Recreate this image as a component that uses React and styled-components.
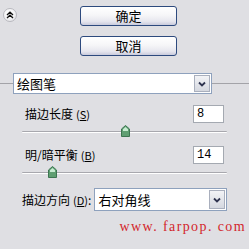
import React from "react";
import styled, { createGlobalStyle } from "styled-components";

const Global = createGlobalStyle`
  html, body { margin: 0; padding: 0; background: #dfdfe3; }
  body { font-family: "Noto Sans CJK SC", "Liberation Sans", sans-serif; }
`;

const Panel = styled.div`
  width: 249px;
  height: 249px;
  overflow: hidden;
  background: #dfdfe3;
  color: #000;
  font-size: 12px;
  display: flex;
  flex-direction: column;
`;

const Top = styled.div`
  display: grid;
  grid-template-columns: 80px 97px;
  padding-top: 6px;
`;

const Collapse = styled.div`
  width: 12px;
  height: 12px;
  margin: 2px 0 0 3px;
  border-radius: 50%;
  border: 1px solid #b9b9bf;
  background: radial-gradient(circle at 40% 35%, #ffffff 0%, #f2f2f4 55%, #d6d6dc 100%);
  display: flex;
  align-items: center;
  justify-content: center;
`;

const Buttons = styled.div`
  display: flex;
  flex-direction: column;
  gap: 10px;
`;

const Button = styled.button`
  box-sizing: border-box;
  width: 97px;
  height: 20px;
  padding: 0;
  border: 1px solid #2d4a7e;
  border-radius: 3px;
  background: linear-gradient(#ffffff 0%, #f6f6f8 45%, #e6e6ee 80%, #c9cbdc 100%);
  font-family: "Noto Sans CJK SC", sans-serif;
  font-size: 13px;
  line-height: 18px;
  color: #000;
`;

const SelectRow = styled.div`
  display: flex;
  align-items: center;
  margin-top: 17px;
  height: 21px;
`;

const Rule = styled.div`
  height: 1px;
  background: #a3a3a8;
  width: ${(p) => (p.$w ? `${p.$w}px` : "auto")};
  flex: ${(p) => (p.$w ? "none" : "1")};
`;

const Select = styled.div`
  box-sizing: border-box;
  width: ${(p) => p.$w}px;
  height: ${(p) => p.$h}px;
  border: 1px solid #8ea1bd;
  background: #fff;
  display: flex;
  align-items: center;
  padding: 1px;
`;

const SelectText = styled.span`
  flex: 1;
  padding-left: 2px;
  font-size: 13px;
  line-height: 16px;
`;

const Arrow = styled.div`
  box-sizing: border-box;
  width: 16px;
  height: 100%;
  border: 1px solid #a9afbd;
  background: linear-gradient(#f2f3f6, #d5d8e0);
  display: flex;
  align-items: center;
  justify-content: center;
`;

const FieldRow = styled.div`
  display: flex;
  align-items: center;
  justify-content: space-between;
  margin-top: ${(p) => p.$mt}px;
  padding: 0 25px;
  height: 18px;
`;

const Label = styled.span`
  font-size: 12px;
  line-height: 16px;
  white-space: nowrap;
`;

const Key = styled.span`
  font-size: 11px;
  margin-left: 3px;
  u { text-decoration-thickness: 1px; }
`;

const NumBox = styled.div`
  box-sizing: border-box;
  width: 31px;
  height: 18px;
  border: 1px solid #a4a9b1;
  background: #fff;
  font-family: "Liberation Mono", monospace;
  font-size: 12px;
  line-height: 16px;
  padding-left: 3px;
`;

const Slider = styled.div`
  position: relative;
  height: 14px;
  margin: ${(p) => p.$mt}px 0 0 22px;
  width: 205px;
`;

const Track = styled.div`
  position: absolute;
  left: 0;
  right: 0;
  top: 6px;
  height: 2px;
  border-radius: 1px;
  background: linear-gradient(#a8a8ae 50%, #ffffff 50%);
`;

const Thumb = styled.svg`
  position: absolute;
  top: 0;
  width: 9px;
  height: 12px;
  margin-left: -4px;
`;

const DirRow = styled.div`
  display: flex;
  align-items: center;
  margin-top: 8px;
  padding-left: 22px;
  height: 23px;
  gap: 3px;
`;

const Watermark = styled.div`
  margin-top: 8px;
  padding-right: 3px;
  text-align: right;
  font-family: "Liberation Serif", serif;
  font-size: 14px;
  letter-spacing: 1.4px;
  line-height: 16px;
  color: #d3262b;
  white-space: pre;
`;

const Chevron = () => (
  <svg width="8" height="6" viewBox="0 0 8 6">
    <path d="M1 1.5 L4 4.5 L7 1.5" fill="none" stroke="#2f3450" strokeWidth="1.8" />
  </svg>
);

const ThumbIcon = ({ pct }) => (
  <Thumb viewBox="0 0 9 12" style={{ left: `${pct}%` }}>
    <path d="M4.5 0.5 L8.5 4 L8.5 11.5 L0.5 11.5 L0.5 4 Z" fill="#5f9f72" stroke="#3d7551" strokeWidth="1" />
    <path d="M4.5 2 L7 4.3 L7 6 L2 6 L2 4.3 Z" fill="#c8ecd2" />
  </Thumb>
);

const SliderBar = ({ pct, mt }) => (
  <Slider $mt={mt}>
    <Track />
    <ThumbIcon pct={pct} />
  </Slider>
);

export default function App() {
  return (
    <Panel>
      <Global />
      <Top>
        <Collapse>
          <svg width="8" height="8" viewBox="0 0 8 8">
            <path d="M1 4 L4 1.2 L7 4 M1 7 L4 4.2 L7 7" fill="none" stroke="#111" strokeWidth="1.3" />
          </svg>
        </Collapse>
        <Buttons>
          <Button>确定</Button>
          <Button>取消</Button>
        </Buttons>
      </Top>

      <SelectRow>
        <Rule $w={13} />
        <Select $w={199} $h={21}>
          <SelectText>绘图笔</SelectText>
          <Arrow><Chevron /></Arrow>
        </Select>
        <Rule />
      </SelectRow>

      <FieldRow $mt={11}>
        <Label>描边长度<Key>(<u>S</u>)</Key></Label>
        <NumBox>8</NumBox>
      </FieldRow>
      <SliderBar pct={50} mt={2} />

      <FieldRow $mt={7}>
        <Label>明/暗平衡<Key>(<u>B</u>)</Key></Label>
        <NumBox>14</NumBox>
      </FieldRow>
      <SliderBar pct={14.6} mt={2} />

      <DirRow>
        <Label>描边方向<Key>(<u>D</u>)</Key>:</Label>
        <Select $w={133} $h={23}>
          <SelectText>右对角线</SelectText>
          <Arrow><Chevron /></Arrow>
        </Select>
      </DirRow>

      <Watermark>www. farpop. com</Watermark>
    </Panel>
  );
}
